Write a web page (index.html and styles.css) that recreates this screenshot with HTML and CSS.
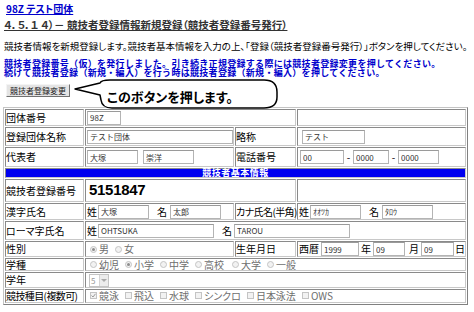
FILE: index.html
```html
<!DOCTYPE html>
<html lang="ja">
<head>
  <meta charset="UTF-8" />
  <title>競技者登録情報新規登録</title>
  <link rel="stylesheet" href="styles.css">
</head>
<body>
  <div class="page">
    <a class="team-link" href="#">98Z テスト団体</a>
    <h1 class="title">４．５．１ ４）－ 競技者登録情報新規登録（競技者登録番号発行）</h1>
    <p class="lead">競技者情報を新規登録します。競技者基本情報を入力の上、「登録（競技者登録番号発行）」ボタンを押してください。</p>
    <p class="notice">
      <span class="notice-line">競技者登録番号（仮）を発行しました。引き続き正規登録する際には競技者登録変更を押してください。</span>
      <span class="notice-line">続けて競技者登録（新規・編入）を行う時は競技者登録（新規・編入）を押してください。</span>
    </p>

    <div class="action">
      <button type="button" class="change-btn">競技者登録変更</button>
      <!-- callout pointing at the button -->
      <svg class="callout" width="212" height="40" viewBox="0 0 212 40">
        <path d="M1 13 L26 7 Q27 4 36 4 L190 4 Q203 4 203 16 L203 21 Q203 32 190 32 L38 32 Q28 32 27 24 L26 19 Z" fill="#fff" stroke="#000" stroke-width="1.5" stroke-linejoin="round" />
      </svg>
      <div class="callout-text">このボタンを押します。</div>
    </div>

    <table class="entry">
      <colgroup>
        <col class="c-label" />
        <col class="c-value" />
        <col class="c-label2" />
        <col class="c-value2" />
      </colgroup>
      <tr class="row-group">
        <td>団体番号</td>
        <td colspan="2" class="val"><input class="fld w34" value="98Z" /></td>
        <td></td>
      </tr>
      <tr class="row-name">
        <td>登録団体名称</td>
        <td class="val"><input class="fld w146" value="テスト団体" /></td>
        <td>略称</td>
        <td class="val"><input class="fld w63 ml3" value="テスト" /></td>
      </tr>
      <tr class="row-rep">
        <td>代表者</td>
        <td class="val">
          <div class="fl">
            <input class="fld w51" value="大塚" />
            <input class="fld w51 ml5" value="崇洋" />
          </div>
        </td>
        <td>電話番号</td>
        <td class="val">
          <div class="fl">
            <input class="fld w44 ml1" value="00" />
            <span class="sep">-</span>
            <input class="fld w36" value="0000" />
            <span class="sep">-</span>
            <input class="fld w41" value="0000" />
          </div>
        </td>
      </tr>
      <tr class="row-head">
        <td colspan="4" class="bar">競技者基本情報</td>
      </tr>
      <tr class="row-no">
        <td>競技者登録番号</td>
        <td colspan="2" class="val"><b class="regno">5151847</b></td>
        <td></td>
      </tr>
      <tr class="row-kanji">
        <td>漢字氏名</td>
        <td class="val">
          <div class="fl">
            <span>姓</span><input class="fld w51 ml1" value="大塚" />
            <span class="ml8">名</span><input class="fld w51 ml3" value="太郎" />
          </div>
        </td>
        <td class="tight">カナ氏名(半角)</td>
        <td class="val">
          <div class="fl">
            <span>姓</span><input class="fld w51 ml1" value="ｵｵﾂｶ" />
            <span class="ml8">名</span><input class="fld w51 ml3" value="ﾀﾛｳ" />
          </div>
        </td>
      </tr>
      <tr class="row-roma">
        <td>ローマ字氏名</td>
        <td colspan="3" class="val">
          <div class="fl">
            <span>姓</span><input class="fld w116 ml1" value="OHTSUKA" />
            <span class="ml8">名</span><input class="fld w116 ml2" value="TAROU" />
          </div>
        </td>
      </tr>
      <tr class="row-sex">
        <td>性別</td>
        <td class="val">
          <div class="fl opts">
            <span class="opt"><i class="radio on"></i>男</span>
            <span class="opt"><i class="radio"></i>女</span>
          </div>
        </td>
        <td>生年月日</td>
        <td class="val">
          <div class="fl">
            <span>西暦</span><input class="fld w38 ml2" value="1999" />
            <span class="ml2">年</span><input class="fld w32 ml2" value="09" />
            <span class="ml4">月</span><input class="fld w33 ml2" value="09" />
            <span class="ml1">日</span>
          </div>
        </td>
      </tr>
      <tr class="row-school">
        <td>学種</td>
        <td colspan="3" class="val">
          <div class="fl opts">
            <span class="opt"><i class="radio"></i>幼児</span>
            <span class="opt"><i class="radio on"></i>小学</span>
            <span class="opt"><i class="radio"></i>中学</span>
            <span class="opt"><i class="radio"></i>高校</span>
            <span class="opt wide"><i class="radio"></i>大学</span>
            <span class="opt"><i class="radio"></i>一般</span>
          </div>
        </td>
      </tr>
      <tr class="row-grade">
        <td>学年</td>
        <td colspan="3" class="val">
          <span class="sel"><span class="sel-val">5</span><span class="sel-btn"></span></span>
        </td>
      </tr>
      <tr class="row-event">
        <td class="tight">競技種目(複数可)</td>
        <td colspan="3" class="val">
          <div class="fl opts">
            <span class="opt"><i class="check on"><svg width="5" height="5" viewBox="0 0 5 5"><polyline points="0.5,2.5 2,4 4.5,0.8" fill="none" stroke="#999" stroke-width="1" /></svg></i>競泳</span>
            <span class="opt"><i class="check"></i>飛込</span>
            <span class="opt"><i class="check"></i>水球</span>
            <span class="opt"><i class="check"></i>シンクロ</span>
            <span class="opt"><i class="check"></i>日本泳法</span>
            <span class="opt"><i class="check"></i>OWS</span>
          </div>
        </td>
      </tr>
    </table>
  </div>
</body>
</html>
```

FILE: styles.css
```css
body {
  margin: 0;
  font-family: "Noto Sans CJK JP", sans-serif;
  font-size: 10px;
  color: #000;
  background-color: #fff;
  font-feature-settings: "palt";
}
.page {
  padding: 3px 4px 0;
}
.team-link {
  display: block;
  margin-left: 2px;
  line-height: 12px;
  font-weight: bold;
  color: #0000cc;
}
.title {
  margin: 3px 0 0;
  font-size: 10.5px;
  line-height: 13px;
  font-weight: bold;
  color: #333;
  text-decoration: underline;
  white-space: nowrap;
}
.lead {
  margin: 9px 0 0;
  font-size: 9.5px;
  line-height: 12px;
  white-space: nowrap;
}
.notice {
  margin: 7px 0 0;
  font-size: 9px;
  font-weight: bold;
  letter-spacing: 0.3px;
  color: #0000cc;
  white-space: nowrap;
  font-feature-settings: normal;
}
.notice-line {
  display: block;
  height: 9px;
  line-height: 9px;
}

/* button + callout */
.action {
  position: relative;
  margin-top: 7px;
  height: 13px;
}
.change-btn {
  display: block;
  margin: 0 0 0 2px;
  height: 13px;
  padding: 0 3px;
  font-family: "Noto Sans CJK JP", sans-serif;
  font-size: 8px;
  line-height: 11px;
  color: #222;
  background-color: #e4e4e4;
  border: 1px solid;
  border-color: #f4f4f4 #707070 #707070 #f4f4f4;
}
.callout {
  position: absolute;
  left: 70px;
  top: -8px;
  overflow: visible;
}
.callout-text {
  position: absolute;
  left: 103px;
  top: 5px;
  font-size: 13px;
  line-height: 15px;
  font-weight: bold;
  white-space: nowrap;
}

/* entry table */
.entry {
  margin: 10px 0 0 -1px;
  width: 465px;
  table-layout: fixed;
  border-collapse: separate;
  border-spacing: 1px;
  border: 1px solid;
  border-color: #c4c4c4 #808080 #808080 #c4c4c4;
}
.c-label { width: 79px; }
.c-value { width: 149px; }
.c-label2 { width: 61px; }
.c-value2 { width: 169px; }
.entry td {
  box-sizing: border-box;
  padding: 0;
  border: 1px solid;
  border-color: #8a8a8a #c8c8c8 #c8c8c8 #8a8a8a;
  vertical-align: middle;
  white-space: nowrap;
  overflow: visible;
  line-height: 12px;
}
.entry td.val {
  padding-left: 1px;
}
.entry td.tight {
  letter-spacing: -0.6px;
}
.row-group td { height: 17px; }
.row-name td { height: 19px; }
.row-rep td { height: 20px; }
.row-head td { height: 10px; }
.row-no td { height: 23px; }
.row-kanji td { height: 17px; }
.row-roma td { height: 19px; }
.row-sex td { height: 16px; }
.row-school td { height: 13px; line-height: 10px; }
.row-grade td { height: 15px; }
.row-event td { height: 14px; line-height: 10px; }

.entry td.bar {
  background-color: #0000f0;
  color: #fff;
  font-size: 9px;
  font-weight: bold;
  text-align: center;
  line-height: 8px;
  letter-spacing: 0.5px;
}
.regno {
  display: inline-block;
  padding-left: 2px;
  font-family: "Liberation Sans", Arial, sans-serif;
  font-size: 15px;
  letter-spacing: -0.3px;
}

.fl {
  display: flex;
  align-items: center;
}
.fld {
  box-sizing: border-box;
  height: 14px;
  margin: 0;
  padding: 0 2px;
  border: 1px solid #b4b4b4;
  border-top-color: #9a9a9a;
  font-family: "Noto Sans CJK JP", sans-serif;
  font-size: 8px;
  color: #333;
  background-color: #fff;
  vertical-align: middle;
}
.w32 { width: 32px; }
.w33 { width: 33px; }
.w34 { width: 34px; }
.w36 { width: 36px; }
.w38 { width: 38px; }
.w41 { width: 41px; }
.w44 { width: 44px; }
.w51 { width: 51px; }
.w63 { width: 63px; }
.w116 { width: 116px; }
.w146 { width: 146px; }
.ml1 { margin-left: 1px; }
.ml2 { margin-left: 2px; }
.ml3 { margin-left: 3px; }
.ml4 { margin-left: 4px; }
.ml5 { margin-left: 5px; }
.ml8 { margin-left: 8px; }
.sep {
  width: 9px;
  text-align: center;
}

/* disabled radio / checkbox look */
.opts {
  padding-left: 3px;
  color: #6e6e6e;
}
.opt {
  display: inline-flex;
  align-items: center;
  margin-right: 6px;
}
.opt.wide {
  margin-left: 2px;
}
.radio, .check {
  box-sizing: border-box;
  display: inline-flex;
  align-items: center;
  justify-content: center;
  width: 7px;
  height: 7px;
  margin-right: 2px;
  border: 1px solid #c4c4c4;
  background-color: #f2f2f2;
}
.radio {
  border-radius: 50%;
}
.radio.on::after {
  content: "";
  width: 3px;
  height: 3px;
  border-radius: 50%;
  background-color: #8c8c8c;
}
.check svg {
  display: block;
}

.sel {
  display: inline-flex;
  box-sizing: border-box;
  height: 13px;
  width: 20px;
  margin-left: 2px;
  vertical-align: middle;
  border: 1px solid #c4c4c4;
  background-color: #fff;
}
.sel-val {
  flex: 1;
  padding-left: 1px;
  font-size: 8px;
  line-height: 11px;
  color: #999;
}
.sel-btn {
  position: relative;
  width: 8px;
  background-color: #ececec;
  border-left: 1px solid #d4d4d4;
}
.sel-btn::after {
  content: "";
  position: absolute;
  left: 1px;
  top: 4px;
  border-left: 3px solid transparent;
  border-right: 3px solid transparent;
  border-top: 3px solid #aaa;
}
```
